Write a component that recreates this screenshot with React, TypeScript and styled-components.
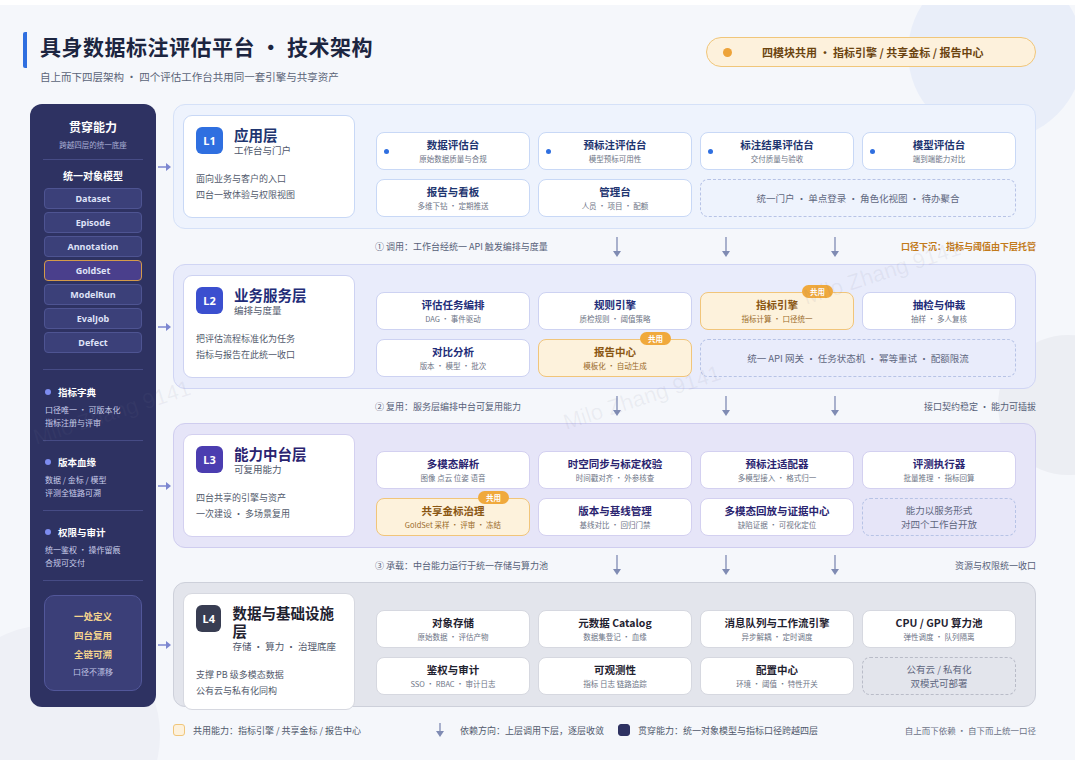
import React from "react";
import styled, { createGlobalStyle, css } from "styled-components";

const Global = createGlobalStyle`
  html, body { margin: 0; padding: 0; background: #fff; }
  body { font-family: "Noto Sans CJK SC", "Noto Sans", sans-serif; }
  * { box-sizing: border-box; }
`;

const Frame = styled.div`
  width: 1080px; height: 767px; padding: 5px 5px 7px 0; overflow: hidden;
`;
const Canvas = styled.div`
  position: relative; width: 100%; height: 100%; background: #f5f7fb; overflow: hidden;
  padding: 22px 0 0 23px;
`;
const Deco = styled.div<{ $x: number; $y: number; $s: number; $c: string }>`
  position: absolute; left: ${p => p.$x}px; top: ${p => p.$y}px;
  width: ${p => p.$s}px; height: ${p => p.$s}px; border-radius: 50%; background: ${p => p.$c};
`;
const Watermark = styled.div<{ $x: number; $y: number }>`
  position: absolute; left: ${p => p.$x}px; top: ${p => p.$y}px; transform: rotate(-18deg);
  font: 22px "Liberation Sans", sans-serif; color: rgba(120,120,150,0.09); white-space: nowrap; pointer-events: none; z-index: 5;
`;
const Header = styled.div`
  position: relative; display: flex; justify-content: space-between; align-items: flex-start; width: 1013px; height: 77px;
`;
const TitleBlock = styled.div`
  border-left: 4px solid #2f6fe0; border-radius: 2px; padding-left: 13px; height: 36px; margin-top: 5px;
`;
const Title = styled.h1`
  margin: 0; font-size: 21px; line-height: 26px; font-weight: 700; color: #1c2540; letter-spacing: 0.5px; margin-top: 1px;
`;
const Subtitle = styled.div`
  font-size: 10.5px; color: #5b6478; margin-top: 10px; margin-left: -17px; padding-left: 17px;
`;
const Pill = styled.div`
  margin-top: 10px; width: 330px; height: 30px; border-radius: 15px; background: #fdf1dc; border: 1.5px solid #f0c67a;
  display: flex; align-items: center; padding-left: 16px; gap: 30px; font-size: 11px; font-weight: 700; color: #6b4410;
`;
const Dot = styled.span<{ $c: string; $s?: number }>`
  width: ${p => p.$s ?? 9}px; height: ${p => p.$s ?? 9}px; border-radius: 50%; background: ${p => p.$c}; flex: none;
`;

const Main = styled.div`
  position: relative; margin-left: 7px; display: grid; grid-template-columns: 126px 17px 863px;
  grid-template-rows: 125px 35px 125px 34px 125px 34px 125px;
`;
const Sidebar = styled.div`
  grid-column: 1; grid-row: 1 / -1; background: #2e3262; border-radius: 12px; padding: 14px 13px 0 13px;
  display: flex; flex-direction: column; align-items: stretch; color: #fff;
`;
const SideTitle = styled.div`font-size: 12px; font-weight: 700; text-align: center;`;
const SideSub = styled.div`font-size: 7.5px; color: #aab0d6; text-align: center; margin-top: 4px;`;
const Divider = styled.div<{ $m: string }>`height: 1px; background: #464b85; margin: ${p => p.$m};`;
const SideHead = styled.div`font-size: 10px; font-weight: 700; text-align: center; margin-bottom: 5px;`;
const ObjItem = styled.div<{ $gold?: boolean }>`
  height: 21px; margin: 0 1px 3px; border-radius: 4px; display: flex; align-items: center; justify-content: center;
  font: 700 9px "Noto Sans", sans-serif; color: #dfe2f7;
  background: ${p => (p.$gold ? "#4a3f8c" : "#3b4079")}; border: 1px solid ${p => (p.$gold ? "#d49a4a" : "#4e5492")};
`;
const SideSection = styled.div`padding-left: 2px;`;
const SideSecHead = styled.div`display: flex; align-items: center; gap: 7px; font-size: 9.5px; font-weight: 700; margin-bottom: 4px;`;
const SideLine = styled.div`font-size: 8px; color: #c9cdea; line-height: 13px;`;
const GoldBox = styled.div`
  margin: 0 1px; height: 96px; border-radius: 10px; background: #3b3f78; border: 1px solid #52579a;
  display: flex; flex-direction: column; align-items: center; justify-content: center; gap: 5px;
`;
const GoldLine = styled.div`font-size: 9.5px; font-weight: 700; color: #f5d58e;`;
const GoldSmall = styled.div`font-size: 8px; color: #c0c4e4;`;

const Connector = styled.div<{ $row: number }>`
  grid-column: 2; grid-row: ${p => p.$row}; align-self: center; display: flex; justify-content: center;
`;

type Theme = { bg: string; border: string; badge: string; title: string; tileBorder: string };
const themes: Theme[] = [
  { bg: "#eef3fd", border: "#d5e1f8", badge: "#2f6fe0", title: "#1e3570", tileBorder: "#c8d8f6" },
  { bg: "#e9ecfb", border: "#d0d5f4", badge: "#3b4fcf", title: "#222c78", tileBorder: "#cdd2f2" },
  { bg: "#e6e5f8", border: "#cfcdef", badge: "#4b3db0", title: "#2a2470", tileBorder: "#d3d0f0" },
  { bg: "#e3e5ec", border: "#cdd0da", badge: "#383d52", title: "#1f2230", tileBorder: "#d6d8e0" },
];

const Layer = styled.div<{ $t: Theme; $row: number }>`
  grid-column: 3; grid-row: ${p => p.$row}; background: ${p => p.$t.bg}; border: 1px solid ${p => p.$t.border};
  border-radius: 12px; padding: 10px 19px 10px 9px; display: grid; grid-template-columns: 172px 1fr; column-gap: 21px;
`;
const Info = styled.div<{ $t: Theme }>`
  background: #fff; border: 1px solid ${p => p.$t.tileBorder}; border-radius: 9px; padding: 10px 12px;
`;
const InfoTop = styled.div`display: flex; gap: 11px; align-items: flex-start;`;
const Badge = styled.div<{ $c: string }>`
  width: 27px; height: 27px; border-radius: 6px; background: ${p => p.$c}; color: #fff; margin-top: 1px;
  display: flex; align-items: center; justify-content: center; font: 700 11px "Noto Sans", sans-serif;
`;
const LayerName = styled.div<{ $c: string }>`font-size: 14.5px; font-weight: 700; color: ${p => p.$c}; line-height: 18px;`;
const LayerSub = styled.div`font-size: 9.5px; color: #4f576b; line-height: 13px;`;
const Desc = styled.div`margin-top: 14px; font-size: 9px; color: #525a6c; line-height: 16px;`;

const Tiles = styled.div`
  padding-top: 17px; display: grid; grid-template-columns: repeat(4, 154px); grid-auto-rows: 38px; gap: 9px 8px;
`;
const Tile = styled.div<{ $t: Theme; $shared?: boolean; $dashed?: boolean; $span?: number }>`
  position: relative; border-radius: 8px; display: flex; flex-direction: column; align-items: center; justify-content: center;
  grid-column: span ${p => p.$span ?? 1};
  background: #fff; border: 1px solid ${p => p.$t.tileBorder};
  ${p => p.$shared && css`background: #fdf2dc; border: 1.5px solid #f1c57a;`}
  ${p => p.$dashed && css`background: transparent; border: 1.3px dashed ${p.$t.tileBorder === "#d6d8e0" ? "#b9bcc8" : "#b7c3e6"};`}
`;
const TileTitle = styled.div<{ $c: string }>`font-size: 10.5px; font-weight: 700; color: ${p => p.$c}; line-height: 14px;`;
const TileSub = styled.div<{ $c?: string }>`font-size: 7.5px; color: ${p => p.$c ?? "#6d7486"}; line-height: 11px; margin-top: 1px;`;
const DashText = styled.div`font-size: 9.5px; color: #5f6780; line-height: 14px; text-align: center;`;
const TileDot = styled.span`
  position: absolute; left: 7px; top: 16px; width: 5px; height: 5px; border-radius: 50%; background: #2f6fe0;
`;
const SharedTag = styled.span`
  position: absolute; right: 20px; top: -8px; height: 13px; padding: 0 8px; border-radius: 7px; background: #f0a93c;
  color: #fff; font-size: 7.5px; font-weight: 700; line-height: 13px;
`;

const FlowRow = styled.div<{ $row: number }>`
  grid-column: 3; grid-row: ${p => p.$row}; display: grid; grid-template-columns: 202px 230px 242px 1fr; align-items: center;
`;
const FlowText = styled.div<{ $right?: boolean; $accent?: boolean }>`
  font-size: 9px; white-space: nowrap; color: ${p => (p.$accent ? "#c27a1a" : "#566078")};
  font-weight: ${p => (p.$accent ? 700 : 400)}; text-align: ${p => (p.$right ? "right" : "left")};
  grid-column: ${p => (p.$right ? 4 : 2)};
`;
const Arrows = styled.div`grid-column: 3; display: flex; justify-content: space-between;`;

const Legend = styled.div`
  margin: 15px 0 0 150px; width: 863px; display: flex; align-items: center; font-size: 9px; color: #4f576b;
`;
const LegendItem = styled.div<{ $w: number }>`display: flex; align-items: center; gap: 8px; width: ${p => p.$w}px;`;
const Swatch = styled.span<{ $bg: string; $b: string }>`
  width: 12px; height: 12px; border-radius: 3px; background: ${p => p.$bg}; border: 1.5px solid ${p => p.$b};
`;
const LegendRight = styled.div`margin-left: auto; color: #6b7286; font-size: 8.5px;`;

const Down = ({ h = 22 }: { h?: number }) => (
  <svg width="24" height={h} viewBox={`0 0 24 ${h}`}>
    <line x1="12" y1="1" x2="12" y2={h - 5} stroke="#7f8bb3" strokeWidth="1.3" />
    <path d={`M8 ${h - 7} L12 ${h - 1} L16 ${h - 7} Z`} fill="#7f8bb3" />
  </svg>
);
const Right = () => (
  <svg width="14" height="10" viewBox="0 0 14 10">
    <line x1="0" y1="5" x2="9" y2="5" stroke="#7b86d0" strokeWidth="1.5" />
    <path d="M8 1 L13 5 L8 9 Z" fill="#7b86d0" />
  </svg>
);

type T = { t?: string; s?: string; shared?: boolean; dashed?: boolean; span?: number; lines?: string[]; dot?: boolean };
const layers: { code: string; name: string; sub: string; desc: string[]; tiles: T[] }[] = [
  {
    code: "L1", name: "应用层", sub: "工作台与门户", desc: ["面向业务与客户的入口", "四台一致体验与权限视图"],
    tiles: [
      { t: "数据评估台", s: "原始数据质量与合规", dot: true },
      { t: "预标注评估台", s: "模型预标可用性", dot: true },
      { t: "标注结果评估台", s: "交付质量与验收", dot: true },
      { t: "模型评估台", s: "端到端能力对比", dot: true },
      { t: "报告与看板", s: "多维下钻 · 定期推送" },
      { t: "管理台", s: "人员 · 项目 · 配额" },
      { dashed: true, span: 2, lines: ["统一门户 · 单点登录 · 角色化视图 · 待办聚合"] },
    ],
  },
  {
    code: "L2", name: "业务服务层", sub: "编排与度量", desc: ["把评估流程标准化为任务", "指标与报告在此统一收口"],
    tiles: [
      { t: "评估任务编排", s: "DAG · 事件驱动" },
      { t: "规则引擎", s: "质检规则 · 阈值策略" },
      { t: "指标引擎", s: "指标计算 · 口径统一", shared: true },
      { t: "抽检与仲裁", s: "抽样 · 多人复核" },
      { t: "对比分析", s: "版本 · 模型 · 批次" },
      { t: "报告中心", s: "模板化 · 自动生成", shared: true },
      { dashed: true, span: 2, lines: ["统一 API 网关 · 任务状态机 · 幂等重试 · 配额限流"] },
    ],
  },
  {
    code: "L3", name: "能力中台层", sub: "可复用能力", desc: ["四台共享的引擎与资产", "一次建设 · 多场景复用"],
    tiles: [
      { t: "多模态解析", s: "图像 点云 位姿 语音" },
      { t: "时空同步与标定校验", s: "时间戳对齐 · 外参核查" },
      { t: "预标注适配器", s: "多模型接入 · 格式归一" },
      { t: "评测执行器", s: "批量推理 · 指标回算" },
      { t: "共享金标治理", s: "GoldSet 采样 · 评审 · 冻结", shared: true },
      { t: "版本与基线管理", s: "基线对比 · 回归门禁" },
      { t: "多模态回放与证据中心", s: "缺陷证据 · 可视化定位" },
      { dashed: true, lines: ["能力以服务形式", "对四个工作台开放"] },
    ],
  },
  {
    code: "L4", name: "数据与基础设施层", sub: "存储 · 算力 · 治理底座", desc: ["支撑 PB 级多模态数据", "公有云与私有化同构"],
    tiles: [
      { t: "对象存储", s: "原始数据 · 评估产物" },
      { t: "元数据 Catalog", s: "数据集登记 · 血缘" },
      { t: "消息队列与工作流引擎", s: "异步解耦 · 定时调度" },
      { t: "CPU / GPU 算力池", s: "弹性调度 · 队列隔离" },
      { t: "鉴权与审计", s: "SSO · RBAC · 审计日志" },
      { t: "可观测性", s: "指标 日志 链路追踪" },
      { t: "配置中心", s: "环境 · 阈值 · 特性开关" },
      { dashed: true, lines: ["公有云 / 私有化", "双模式可部署"] },
    ],
  },
];

const flows = [
  { l: "① 调用：工作台经统一 API 触发编排与度量", r: "口径下沉：指标与阈值由下层托管", accent: true },
  { l: "② 复用：服务层编排中台可复用能力", r: "接口契约稳定 · 能力可插拔" },
  { l: "③ 承载：中台能力运行于统一存储与算力池", r: "资源与权限统一收口" },
];

const objs = ["Dataset", "Episode", "Annotation", "GoldSet", "ModelRun", "EvalJob", "Defect"];
const sideSecs = [
  { h: "指标字典", l: ["口径唯一 · 可版本化", "指标注册与评审"] },
  { h: "版本血缘", l: ["数据 / 金标 / 模型", "评测全链路可溯"] },
  { h: "权限与审计", l: ["统一鉴权 · 操作留痕", "合规可交付"] },
];

export default function App() {
  return (
    <Frame>
      <Global />
      <Canvas>
        <Deco $x={908} $y={-40} $s={175} $c="#e9eef9" />
        <Deco $x={998} $y={330} $s={140} $c="#eceef3" />
        <Deco $x={-60} $y={620} $s={220} $c="#eef0f6" />
        <Header>
          <TitleBlock>
            <Title>具身数据标注评估平台 · 技术架构</Title>
            <Subtitle>自上而下四层架构 · 四个评估工作台共用同一套引擎与共享资产</Subtitle>
          </TitleBlock>
          <Pill>
            <Dot $c="#eda33a" />
            <span>四模块共用 · 指标引擎 / 共享金标 / 报告中心</span>
          </Pill>
        </Header>
        <Main>
          <Sidebar>
            <SideTitle>贯穿能力</SideTitle>
            <SideSub>跨越四层的统一底座</SideSub>
            <Divider $m="9px 0 8px" />
            <SideHead>统一对象模型</SideHead>
            {objs.map(o => <ObjItem key={o} $gold={o === "GoldSet"}>{o}</ObjItem>)}
            <Divider $m="13px 0 15px" />
            {sideSecs.map((s, i) => (
              <React.Fragment key={s.h}>
                <SideSection>
                  <SideSecHead><Dot $c="#7d8cf0" $s={6} />{s.h}</SideSecHead>
                  {s.l.map(x => <SideLine key={x}>{x}</SideLine>)}
                </SideSection>
                <Divider $m={i < 2 ? "11px 0 14px" : "11px 0 14px"} />
              </React.Fragment>
            ))}
            <GoldBox>
              <GoldLine>一处定义</GoldLine>
              <GoldLine>四台复用</GoldLine>
              <GoldLine>全链可溯</GoldLine>
              <GoldSmall>口径不漂移</GoldSmall>
            </GoldBox>
          </Sidebar>
          {layers.map((L, i) => {
            const th = themes[i];
            return (
              <React.Fragment key={L.code}>
                <Connector $row={i * 2 + 1}><Right /></Connector>
                <Layer $t={th} $row={i * 2 + 1}>
                  <Info $t={th}>
                    <InfoTop>
                      <Badge $c={th.badge}>{L.code}</Badge>
                      <div>
                        <LayerName $c={i === 3 ? "#1f2230" : th.title}>{L.name}</LayerName>
                        <LayerSub>{L.sub}</LayerSub>
                      </div>
                    </InfoTop>
                    <Desc>{L.desc.map(d => <div key={d}>{d}</div>)}</Desc>
                  </Info>
                  <Tiles>
                    {L.tiles.map((tl, k) =>
                      tl.dashed ? (
                        <Tile key={k} $t={th} $dashed $span={tl.span}>
                          {tl.lines!.map(x => <DashText key={x}>{x}</DashText>)}
                        </Tile>
                      ) : (
                        <Tile key={k} $t={th} $shared={tl.shared}>
                          {tl.dot && <TileDot />}
                          {tl.shared && <SharedTag>共用</SharedTag>}
                          <TileTitle $c={tl.shared ? "#8a5612" : th.title}>{tl.t}</TileTitle>
                          <TileSub $c={tl.shared ? "#9a6a2a" : undefined}>{tl.s}</TileSub>
                        </Tile>
                      )
                    )}
                  </Tiles>
                </Layer>
                {i < 3 && (
                  <FlowRow $row={i * 2 + 2}>
                    <FlowText>{flows[i].l}</FlowText>
                    <Arrows><Down /><Down /><Down /></Arrows>
                    <FlowText $right $accent={flows[i].accent}>{flows[i].r}</FlowText>
                  </FlowRow>
                )}
              </React.Fragment>
            );
          })}
        </Main>
        <Legend>
          <LegendItem $w={255}><Swatch $bg="#fdf1dc" $b="#f0c67a" />共用能力：指标引擎 / 共享金标 / 报告中心</LegendItem>
          <LegendItem $w={190}><Down h={16} />依赖方向：上层调用下层，逐层收敛</LegendItem>
          <LegendItem $w={260}><Swatch $bg="#2e3262" $b="#2e3262" />贯穿能力：统一对象模型与指标口径跨越四层</LegendItem>
          <LegendRight>自上而下依赖 · 自下而上统一口径</LegendRight>
        </Legend>
        <Watermark $x={800} $y={255}>Milo Zhang 9141</Watermark>
        <Watermark $x={560} $y={380}>Milo Zhang 9141</Watermark>
        <Watermark $x={30} $y={395}>Milo Zhang 9141</Watermark>
      </Canvas>
    </Frame>
  );
}
